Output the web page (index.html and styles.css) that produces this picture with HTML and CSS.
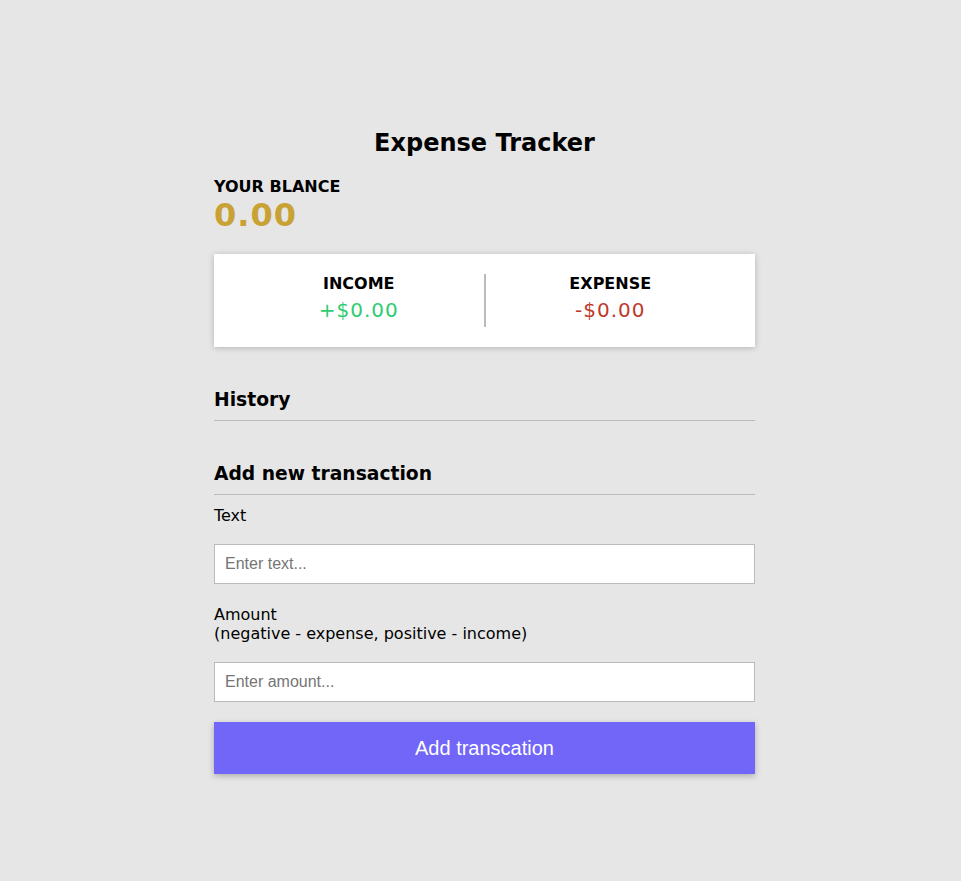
FILE: index.html
```
<!DOCTYPE html>
<html lang="en">
<head>
<meta charset="UTF-8">
<title>Expense Tracker</title>
<link rel="stylesheet" href="styles.css">
</head>
<body>
  <h2 class="title">Expense Tracker</h2>
  <div class="container">
    <h4 class="caption">Your Blance</h4>
    <h1 class="balance">0.00</h1>

    <div class="inc-exp">
      <div class="inc-exp-col">
        <h4 class="caption">Income</h4>
        <p class="money plus">+$0.00</p>
      </div>
      <div class="inc-exp-col">
        <h4 class="caption">Expense</h4>
        <p class="money minus">-$0.00</p>
      </div>
    </div>

    <h3 class="section-title">History</h3>
    <ul class="list"></ul>

    <h3 class="section-title">Add new transaction</h3>
    <form class="form">
      <div class="form-control">
        <label class="label" for="text">Text</label>
        <input class="field" type="text" id="text" placeholder="Enter text...">
      </div>
      <div class="form-control">
        <label class="label" for="amount">Amount <br>(negative - expense, positive - income)</label>
        <input class="field" type="number" id="amount" placeholder="Enter amount...">
      </div>
      <button class="btn" type="button">Add transcation</button>
    </form>
  </div>
</body>
</html>
```
FILE: styles.css
```
* {
  box-sizing: border-box;
}

body {
  background-color: #e6e6e6;
  margin: 0;
  padding: 129px 0 0 8px;
  display: flex;
  flex-direction: column;
  align-items: center;
  font-family: "DejaVu Sans", Verdana, sans-serif;
  font-size: 16px;
  color: #000;
}

.title {
  font-size: 24px;
  font-weight: bold;
  margin: 0;
  text-align: center;
}

.container {
  width: 541px;
  margin: 2px 0 30px;
}

.caption {
  margin: 18px 0 0;
  font-size: 16px;
  font-weight: bold;
  text-transform: uppercase;
}

.balance {
  margin: 0;
  font-size: 32px;
  letter-spacing: 1px;
  color: #c9a236;
}

.inc-exp {
  background-color: #fff;
  box-shadow: 0 1px 6px rgba(0, 0, 0, 0.22);
  padding: 20px;
  display: flex;
  margin: 20px 0 0;
}

.inc-exp-col {
  flex: 1;
  text-align: center;
}

.inc-exp-col .caption {
  margin: 0;
}

.inc-exp-col:first-of-type {
  border-right: 2px solid #bbb;
}

.money {
  font-size: 20px;
  letter-spacing: 1px;
  margin: 5px 0;
}

.money.plus {
  color: #2ecc71;
}

.money.minus {
  color: #c0392b;
}

.section-title {
  font-size: 18.72px;
  font-weight: bold;
  border-bottom: 1px solid #bbb;
  padding-bottom: 10px;
  margin: 42px 0 0;
}

.list {
  list-style: none;
  padding: 0;
  margin: 0;
}

.form {
  margin: 0;
}

.form-control {
  margin-bottom: 10px;
}

.label {
  display: inline-block;
  margin: 11px 0 19px;
}

.field {
  display: block;
  width: 100%;
  border: 1px solid #bbb;
  border-radius: 0;
  font-family: "Liberation Sans", Arial, sans-serif;
  font-size: 16px;
  padding: 10px;
  height: 40px;
  background: #fff;
}

.field::placeholder {
  color: #757575;
}

.btn {
  display: block;
  width: 100%;
  height: 52px;
  margin: 20px 0 30px;
  border: 0;
  background-color: #7166f8;
  color: #fff;
  font-family: "Liberation Sans", Arial, sans-serif;
  font-size: 20px;
  box-shadow: 0 2px 6px rgba(0, 0, 0, 0.25);
  cursor: pointer;
}
```
